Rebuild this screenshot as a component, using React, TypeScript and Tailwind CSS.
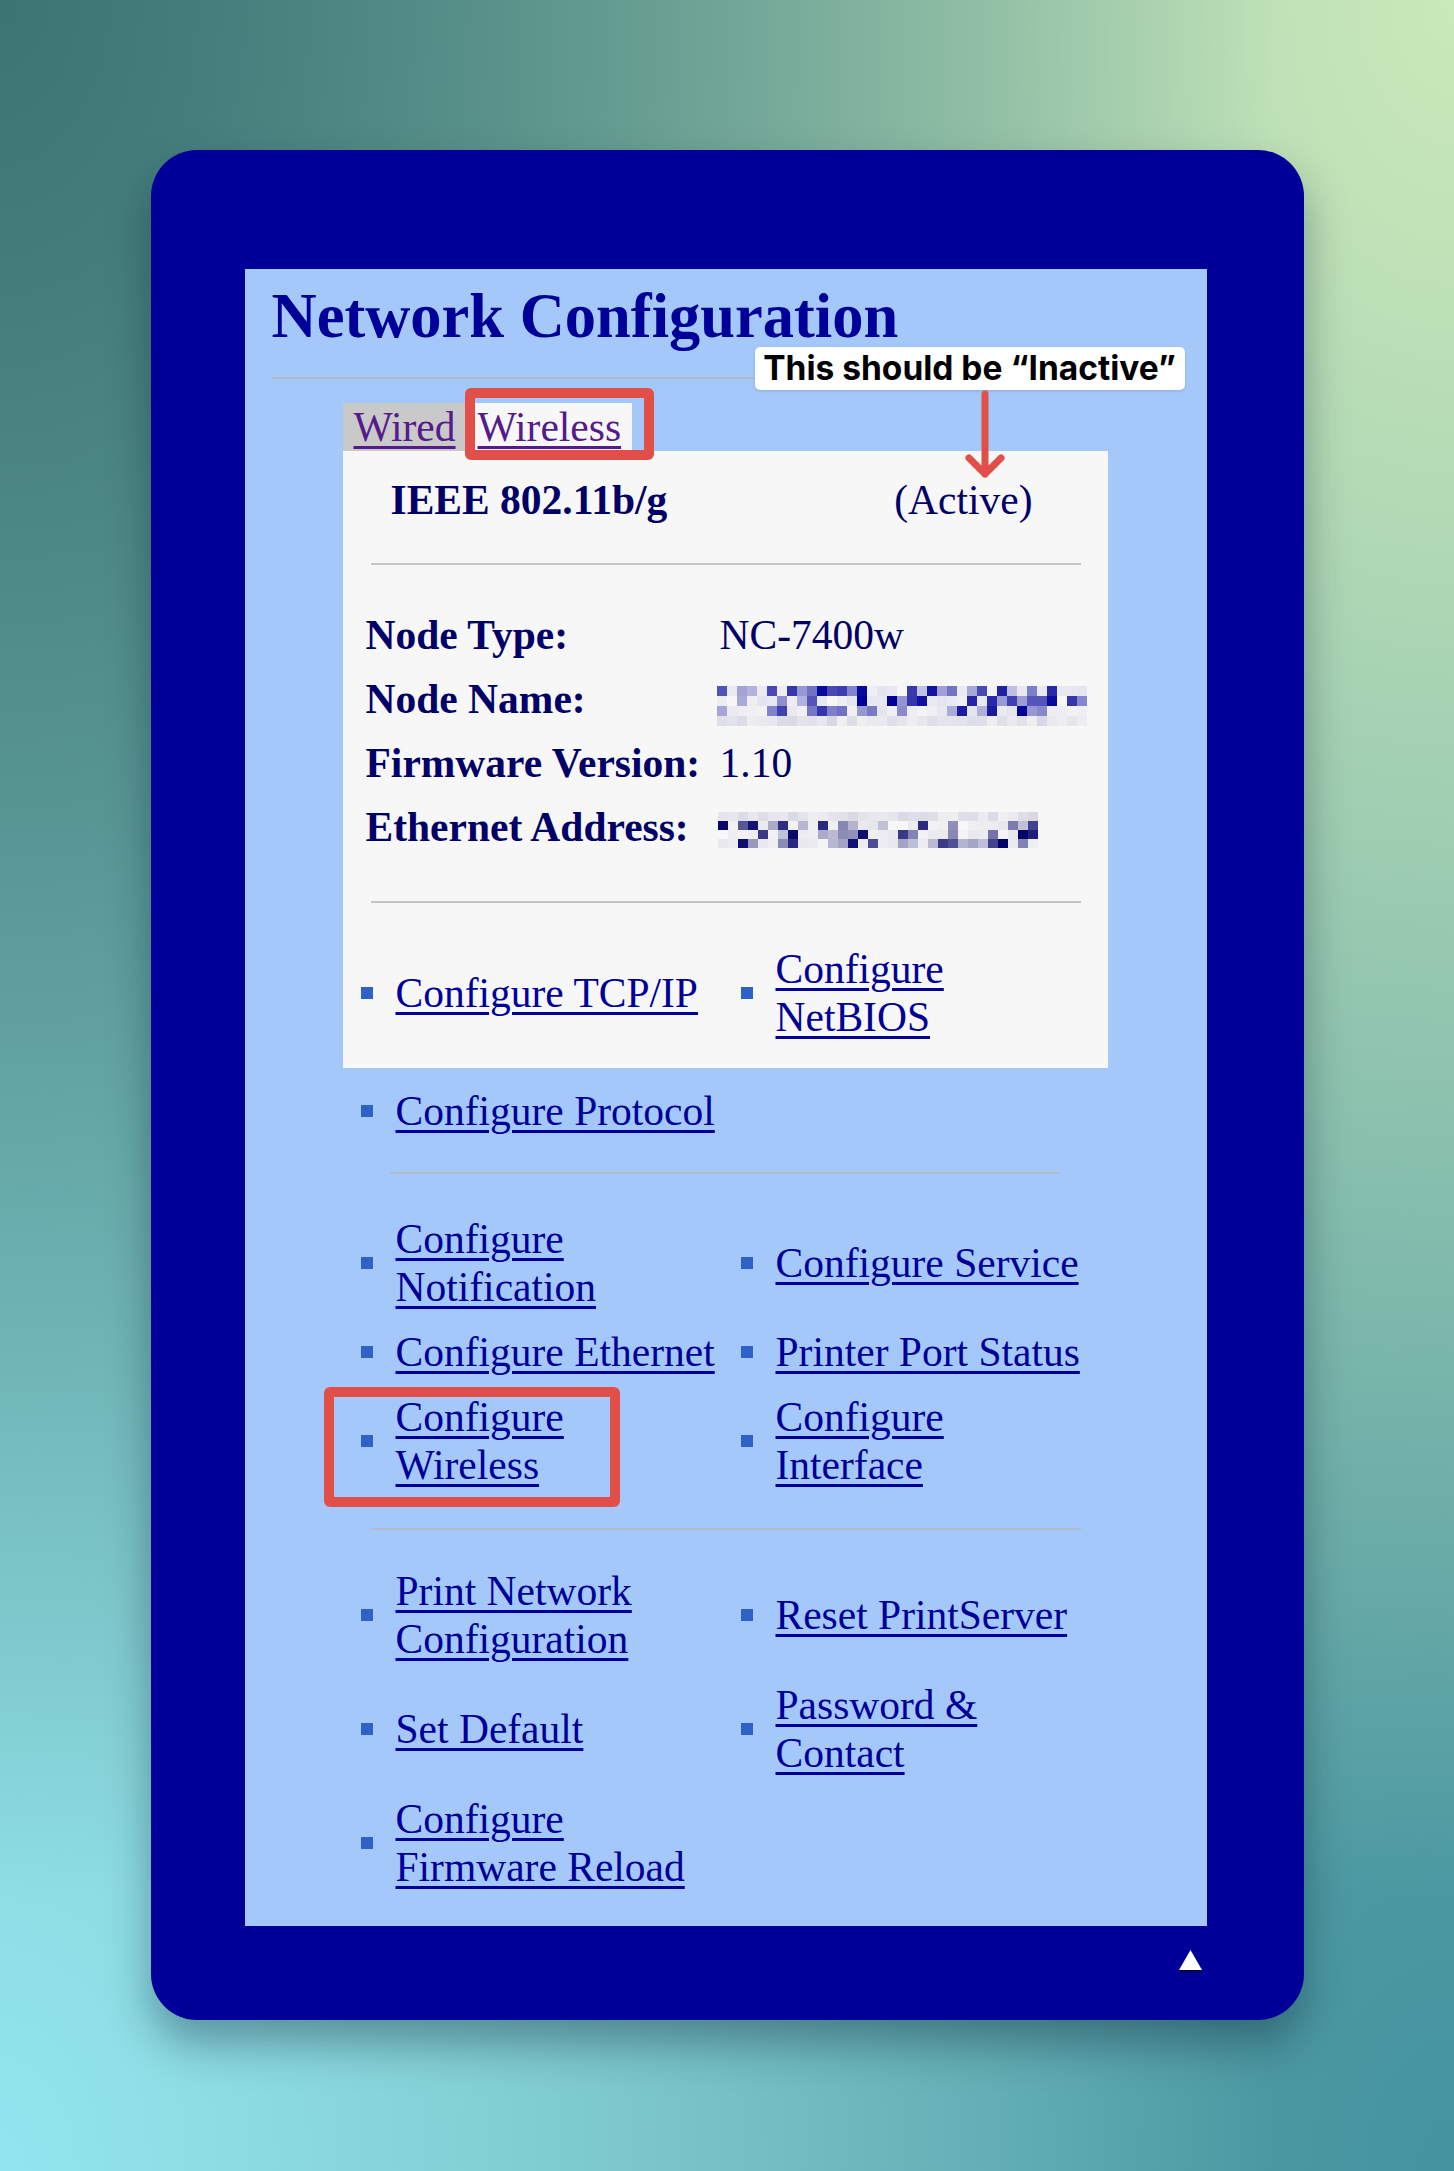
import React from "react";

type Cell = { a: number; c: string };

function mulberry(seed: number) {
  let t = seed;
  return () => {
    t = (t + 0x6d2b79f5) | 0;
    let r = Math.imul(t ^ (t >>> 15), 1 | t);
    r = (r + Math.imul(r ^ (r >>> 7), 61 | r)) ^ r;
    return ((r ^ (r >>> 14)) >>> 0) / 4294967296;
  };
}

function makeMosaic(seed: number, cols: number, rows: number, ink: string, faintRow: number): Cell[][] {
  const rand = mulberry(seed);
  const grid: Cell[][] = [];
  for (let r = 0; r < rows; r++) {
    const row: Cell[] = [];
    for (let c = 0; c < cols; c++) {
      const p = rand();
      if (r === faintRow) {
        row.push({ a: 0.04 + rand() * 0.14, c: "80,80,140" });
      } else if (p < 0.28) {
        row.push({ a: 0.65 + rand() * 0.35, c: ink });
      } else if (p < 0.55) {
        row.push({ a: 0.2 + rand() * 0.35, c: ink });
      } else {
        row.push({ a: rand() * 0.07, c: ink });
      }
    }
    grid.push(row);
  }
  return grid;
}

const nodeName = makeMosaic(7, 37, 4, "0,0,153", 3);
const etherAddr = makeMosaic(21, 32, 4, "0,0,102", 0);

function Mosaic({ grid, h }: { grid: Cell[][]; h: number }) {
  return (
    <div className="flex flex-col">
      {grid.map((row, i) => (
        <div key={i} className="flex">
          {row.map((cell, j) => (
            <span
              key={j}
              className="block w-[10px]"
              style={{ height: h, background: `rgba(${cell.c},${cell.a.toFixed(2)})` }}
            />
          ))}
        </div>
      ))}
    </div>
  );
}

function NavLink({ lines }: { lines: string[] }) {
  return (
    <div className="flex items-center gap-[23px]">
      <span className="h-[12px] w-[12px] shrink-0 bg-[#2f62c9]" />
      <a
        href="#"
        className="whitespace-nowrap text-[#000099] underline decoration-[3px] underline-offset-[5px]"
      >
        {lines.map((line, i) => (
          <React.Fragment key={line}>
            {i > 0 && <br />}
            {line}
          </React.Fragment>
        ))}
      </a>
    </div>
  );
}

const infoRows = [
  { label: "Node Type:", value: "NC-7400w" },
  { label: "Node Name:", value: null },
  { label: "Firmware Version:", value: "1.10" },
  { label: "Ethernet Address:", value: null },
];

export default function App() {
  return (
    <div className="min-h-[2171px] w-full bg-[#74b4ac] bg-[radial-gradient(ellipse_at_0%_0%,#3b7473_0%,transparent_62%),radial-gradient(ellipse_at_100%_0%,#cbe9b9_0%,transparent_62%),radial-gradient(ellipse_at_0%_100%,#92e5ef_0%,transparent_62%),radial-gradient(ellipse_at_100%_100%,#4493a0_0%,transparent_62%)] pt-[150px]">
      <div className="mx-auto flex h-[1870px] w-[1153px] flex-col rounded-[46px] bg-[#000099] pl-[94px] pt-[119px] shadow-[0_24px_44px_rgba(0,20,40,0.35)]">
        <div className="relative h-[1657px] w-[962px] bg-[#a4c8fa] font-['Liberation_Serif','Times_New_Roman',serif] text-[41.5px] leading-[48px]">
          <h1 className="mt-[11px] pl-[27px] text-[62.5px] font-bold leading-[72px] text-[#000099]">
            Network Configuration
          </h1>
          <div className="mx-[27px] mt-[25px] border-t-2 border-[#b1bac9]" />

          <div className="ml-[98px] mt-[24px] flex">
            <a href="#" className="h-[48px] bg-[#c9c9c9] px-[11px] text-[#551a8b] underline decoration-[3px] underline-offset-[5px]">
              Wired
            </a>
            <a href="#" className="h-[48px] bg-[#f7f7f7] px-[11px] text-[#551a8b] underline decoration-[3px] underline-offset-[5px]">
              Wireless
            </a>
          </div>

          <div className="ml-[98px] flex h-[617px] w-[765px] flex-col bg-[#f7f7f7] pt-[25px] text-[#000066]">
            <div className="flex justify-between pl-[48px] pr-[75px]">
              <span className="font-bold">IEEE 802.11b/g</span>
              <span>(Active)</span>
            </div>
            <div className="ml-[28px] mr-[27px] mt-[39px] border-t-2 border-[#c4c4c4]" />

            <div className="mt-[46px] flex flex-col gap-[16px] pl-[23px]">
              {infoRows.map((row, i) => (
                <div key={row.label} className="grid h-[48px] grid-cols-[354px_1fr]">
                  <span className="font-bold">{row.label}</span>
                  {row.value ? (
                    <span>{row.value}</span>
                  ) : i === 1 ? (
                    <div className="-ml-[3px] pt-[11px]">
                      <Mosaic grid={nodeName} h={10} />
                    </div>
                  ) : (
                    <div className="-ml-[2px] pt-[9px]">
                      <Mosaic grid={etherAddr} h={9} />
                    </div>
                  )}
                </div>
              ))}
            </div>

            <div className="ml-[28px] mr-[27px] mt-[50px] border-t-2 border-[#c4c4c4]" />

            <div className="mt-[42px] grid grid-cols-[380px_1fr] items-center pl-[18px]">
              <NavLink lines={["Configure TCP/IP"]} />
              <NavLink lines={["Configure", "NetBIOS"]} />
            </div>
          </div>

          <div className="ml-[116px] mt-[19px]">
            <NavLink lines={["Configure Protocol"]} />
          </div>

          <div className="ml-[145px] mt-[37px] w-[671px] border-t-2 border-[#b1bac9]" />

          <div className="ml-[116px] mt-[41px] grid grid-cols-[380px_1fr] items-center gap-y-[17px]">
            <NavLink lines={["Configure", "Notification"]} />
            <NavLink lines={["Configure Service"]} />
            <NavLink lines={["Configure Ethernet"]} />
            <NavLink lines={["Printer Port Status"]} />
            <NavLink lines={["Configure", "Wireless"]} />
            <NavLink lines={["Configure", "Interface"]} />
          </div>

          <div className="ml-[126px] mt-[39px] w-[710px] border-t-2 border-[#b1bac9]" />

          <div className="ml-[116px] mt-[37px] grid grid-cols-[380px_1fr] items-center gap-y-[18px]">
            <NavLink lines={["Print Network", "Configuration"]} />
            <NavLink lines={["Reset PrintServer"]} />
            <NavLink lines={["Set Default"]} />
            <NavLink lines={["Password &", "Contact"]} />
            <NavLink lines={["Configure", "Firmware Reload"]} />
          </div>

          {/* annotations */}
          <div className="absolute left-[510px] top-[78px] flex h-[43px] w-[430px] items-center justify-center whitespace-nowrap rounded-[5px] bg-white font-['Inter',sans-serif] text-[33.5px] font-bold leading-[43px] text-black shadow-[0_1px_3px_rgba(0,0,0,0.15)]">
            This should be “Inactive”
          </div>
          <svg className="absolute left-[720px] top-[119px]" width="40" height="92" viewBox="0 0 40 92">
            <path
              d="M20 6 V86 M4 70 L20 86 L36 70"
              fill="none"
              stroke="#e14f48"
              strokeWidth="7"
              strokeLinecap="round"
              strokeLinejoin="round"
            />
          </svg>
          <div className="absolute left-[220px] top-[119px] h-[72px] w-[189px] rounded-[6px] border-[10px] border-[#e14f48]" />
          <div className="absolute left-[79px] top-[1118px] h-[120px] w-[296px] rounded-[6px] border-[10px] border-[#e14f48]" />
        </div>

        <div className="mt-[23px] flex justify-end pr-[101px]">
          <svg width="25" height="23" viewBox="0 0 25 23" className="drop-shadow-[0_2px_1px_rgba(0,0,60,0.9)]">
            <path d="M12.5 1 L24 21 H1 Z" fill="#ffffff" />
          </svg>
        </div>
      </div>
    </div>
  );
}
